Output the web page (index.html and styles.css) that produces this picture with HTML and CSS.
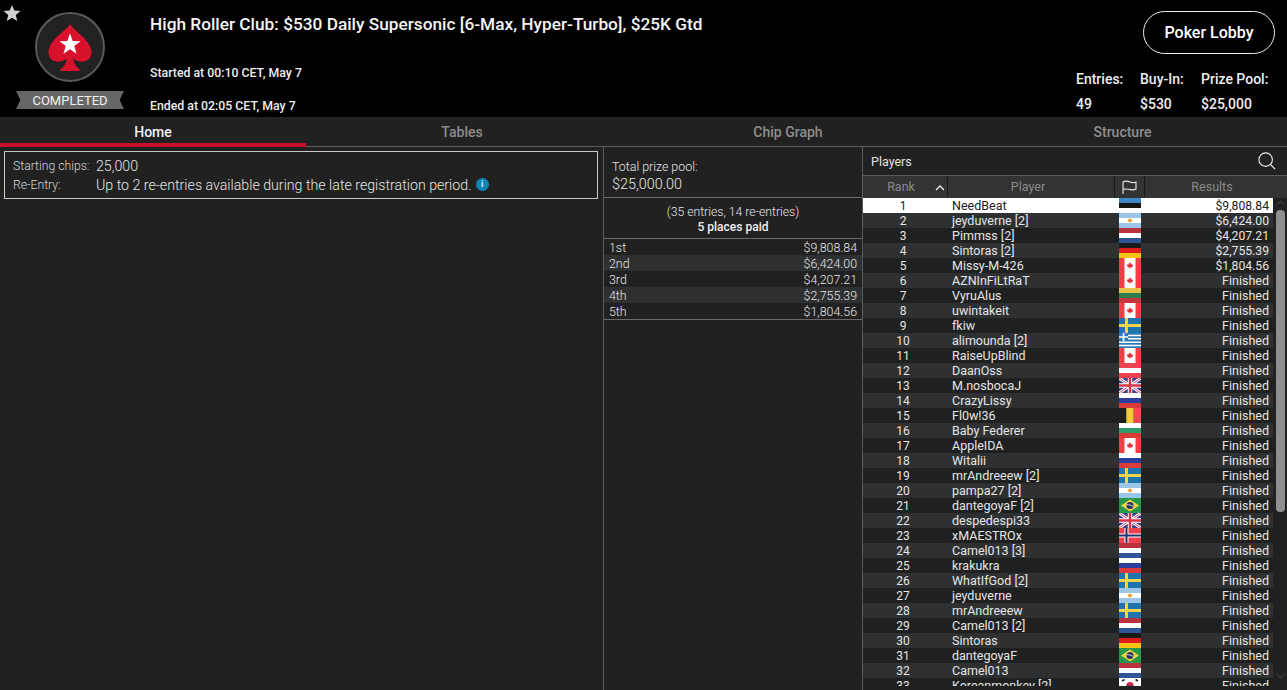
FILE: index.html
```html
<!DOCTYPE html>
<html lang="en">
<head>
<meta charset="utf-8">
<title>Tournament Lobby</title>
<link rel="stylesheet" href="styles.css">
</head>
<body>
<svg class="sprite" width="0" height="0" aria-hidden="true">
  <defs>
    <symbol id="leaf" viewBox="0 0 10 10"><path d="M5 0.5 6 2.3 7 1.8 6.6 4.2 7.9 3 8.3 3.9 9.6 3.7 9.2 5.1 9.8 5.4 7.6 7.2 7.9 8 5.3 7.7V9.6H4.7V7.7L2.1 8 2.4 7.2 0.2 5.4 0.8 5.1 0.4 3.7 1.7 3.9 2.1 3 3.4 4.2 3 1.8 4 2.3Z" fill="#e2303a"/></symbol>
    <symbol id="ee" viewBox="0 0 22 15"><rect width="22" height="5" fill="#3f86c4"/><rect y="5" width="22" height="5" fill="#161616"/><rect y="10" width="22" height="5" fill="#fff"/></symbol>
    <symbol id="ar" viewBox="0 0 22 15"><rect width="22" height="15" fill="#9cc6e8"/><rect y="5" width="22" height="5" fill="#fff"/><circle cx="11" cy="7.5" r="2" fill="#e8a33d"/></symbol>
    <symbol id="nl" viewBox="0 0 22 15"><rect width="22" height="5" fill="#b8323f"/><rect y="5" width="22" height="5" fill="#fff"/><rect y="10" width="22" height="5" fill="#2f5597"/></symbol>
    <symbol id="de" viewBox="0 0 22 15"><rect width="22" height="5" fill="#1a1a1a"/><rect y="5" width="22" height="5" fill="#dd1c1c"/><rect y="10" width="22" height="5" fill="#f6c413"/></symbol>
    <symbol id="ca" viewBox="0 0 22 15"><rect width="22" height="15" fill="#ee3f46"/><rect x="5.5" width="11" height="15" fill="#fff"/><use href="#leaf" x="7.5" y="4" width="7" height="7"/></symbol>
    <symbol id="lt" viewBox="0 0 22 15"><rect width="22" height="5" fill="#e6c24a"/><rect y="5" width="22" height="5" fill="#2c7d4b"/><rect y="10" width="22" height="5" fill="#c6343f"/></symbol>
    <symbol id="se" viewBox="0 0 22 15"><rect width="22" height="15" fill="#1f74ad"/><rect x="6" width="3" height="15" fill="#f2d14e"/><rect y="6" width="22" height="3" fill="#f2d14e"/></symbol>
    <symbol id="gr" viewBox="0 0 22 15"><rect width="22" height="15" fill="#2f7bb8"/><path d="M0 2.5H22M0 5.8H22M0 9.2H22M0 12.5H22" stroke="#fff" stroke-width="1.6"/><rect width="9" height="8" fill="#2f7bb8"/><path d="M4.5 0V8M0 4H9" stroke="#fff" stroke-width="1.7"/></symbol>
    <symbol id="at" viewBox="0 0 22 15"><rect width="22" height="15" fill="#ec4250"/><rect y="5" width="22" height="5" fill="#fff"/></symbol>
    <symbol id="uk" viewBox="0 0 22 15"><rect width="22" height="15" fill="#3b3f8f"/><path d="M0 0 22 15M22 0 0 15" stroke="#fff" stroke-width="3"/><path d="M0 0 22 15M22 0 0 15" stroke="#d84a6a" stroke-width="1"/><path d="M11 0V15M0 7.5H22" stroke="#fff" stroke-width="4.5"/><path d="M11 0V15M0 7.5H22" stroke="#d9344a" stroke-width="2.5"/></symbol>
    <symbol id="ru" viewBox="0 0 22 15"><rect width="22" height="5" fill="#fff"/><rect y="5" width="22" height="5" fill="#2a3f9c"/><rect y="10" width="22" height="5" fill="#db3a3a"/></symbol>
    <symbol id="be" viewBox="0 0 22 15"><rect width="7.3" height="15" fill="#1e1e1e"/><rect x="7.3" width="7.4" height="15" fill="#f4c935"/><rect x="14.7" width="7.3" height="15" fill="#f04a55"/></symbol>
    <symbol id="bg" viewBox="0 0 22 15"><rect width="22" height="5" fill="#fff"/><rect y="5" width="22" height="5" fill="#2f9a6a"/><rect y="10" width="22" height="5" fill="#d83a34"/></symbol>
    <symbol id="br" viewBox="0 0 22 15"><rect width="22" height="15" fill="#25994a"/><path d="M11 1.5 20 7.5 11 13.5 2 7.5Z" fill="#f4d23c"/><circle cx="11" cy="7.5" r="3.5" fill="#25306f"/><path d="M7.8 6.7C10 6.5 12.5 7.2 14.2 8.6" stroke="#fff" stroke-width=".8" fill="none"/></symbol>
    <symbol id="no" viewBox="0 0 22 15"><rect width="22" height="15" fill="#ec4250"/><path d="M7.5 0V15M0 7.5H22" stroke="#fff" stroke-width="4"/><path d="M7.5 0V15M0 7.5H22" stroke="#27306f" stroke-width="2"/></symbol>
    <symbol id="kr" viewBox="0 0 22 15"><rect width="22" height="15" fill="#fff"/><circle cx="11" cy="7.5" r="3.6" fill="#d4263a"/><path d="M7.4 7.5A3.6 3.6 0 0 0 14.6 7.5Z" fill="#2a3f8f"/><path d="M3 3 5.500 1.500M16.500 1.500 19 3M3 12 5.500 13.500M16.500 13.500 19 12" stroke="#222" stroke-width="1.600"/></symbol>
  </defs>
</svg>

<header class="top">
  <svg class="fav" viewBox="0 0 20 20" aria-hidden="true"><path d="M10 1 12.600 7.300 19.400 7.800 14.200 12.200 15.800 18.900 10 15.300 4.200 18.900 5.800 12.200 0.600 7.800 7.400 7.300Z" fill="#d0d0d0"/></svg>
  <div class="brand">
    <div class="logo">
      <svg viewBox="0 0 46 50" class="spade" aria-hidden="true">
        <path d="M23 1C28 9 45.500 18 45.500 31C45.500 40 34 43.500 26.500 37C27 42 29 46 33 48V50H13V48C17 46 19 42 19.500 37C12 43.500 0.500 40 0.500 31C0.500 18 18 9 23 1Z" fill="#d8112d"/>
        <path d="M23 11 25.800 18.700 34 19 27.500 24 29.800 32 23 27.300 16.200 32 18.500 24 12 19 20.200 18.700Z" fill="#fff"/>
      </svg>
    </div>
    <div class="ribbon">COMPLETED</div>
  </div>
  <div class="info">
    <h1 class="title">High Roller Club: $530 Daily Supersonic [6-Max, Hyper-Turbo], $25K Gtd</h1>
    <p class="time first">Started at 00:10 CET, May 7</p>
    <p class="time">Ended at 02:05 CET, May 7</p>
  </div>
  <div class="side">
    <button class="lobby" type="button">Poker Lobby</button>
    <div class="stats">
      <div class="stat s1"><span>Entries:</span><span>49</span></div>
      <div class="stat s2"><span>Buy-In:</span><span>$530</span></div>
      <div class="stat s3"><span>Prize Pool:</span><span>$25,000</span></div>
    </div>
  </div>
</header>

<nav class="tabs">
  <div class="tab active t1">Home</div>
  <div class="tab t2">Tables</div>
  <div class="tab t3">Chip Graph</div>
  <div class="tab t4">Structure</div>
</nav>

<main class="main">
  <section class="home">
    <div class="facts">
      <div class="fact"><span class="label">Starting chips:</span><span class="val">25,000</span></div>
      <div class="fact"><span class="label">Re-Entry:</span><span class="val">Up to 2 re-entries available during the late registration period.</span><span class="i">i</span></div>
    </div>
  </section>

  <section class="prizes">
    <div class="pool"><div>Total prize pool:</div><div class="big">$25,000.00</div></div>
    <div class="paid"><div>(35 entries, 14 re-entries)</div><div class="b">5 places paid</div></div>
    <div class="plist">
      <div class="prow"><span>1st</span><span>$9,808.84</span></div>
      <div class="prow"><span>2nd</span><span>$6,424.00</span></div>
      <div class="prow"><span>3rd</span><span>$4,207.21</span></div>
      <div class="prow"><span>4th</span><span>$2,755.39</span></div>
      <div class="prow"><span>5th</span><span>$1,804.56</span></div>
    </div>
  </section>

  <section class="players">
    <div class="phead"><span>Players</span>
      <svg class="search" viewBox="0 0 20 20" aria-hidden="true"><circle cx="8.500" cy="8.500" r="7.500" fill="none" stroke="#eee" stroke-width="1.200"/><path d="M14 14 19 19" stroke="#eee" stroke-width="1.400"/></svg>
    </div>
    <div class="thead">
      <div class="th rank">Rank<svg class="sort" viewBox="0 0 10 6" aria-hidden="true"><path d="M1 5 5 1 9 5" fill="none" stroke="#eee" stroke-width="1.300"/></svg></div>
      <div class="th player">Player</div>
      <div class="th flagh"><svg viewBox="0 0 15 14" aria-hidden="true"><path d="M1 14V2C4 0.500 6 1 8 2S12 2.800 14 2V9C11 10.500 10 10 8 9.500S3 8.800 1 9.500" fill="none" stroke="#eee" stroke-width="1.100"/></svg></div>
      <div class="th results">Results</div>
    </div>
    <div class="tbody">
      <div class="rows">
        <div class="row first"><span class="r">1</span><span class="n">NeedBeat</span><svg class="flag"><use href="#ee"/></svg><span class="w m">$9,808.84</span></div>
        <div class="row"><span class="r">2</span><span class="n">jeyduverne [2]</span><svg class="flag"><use href="#ar"/></svg><span class="w m">$6,424.00</span></div>
        <div class="row"><span class="r">3</span><span class="n">Pimmss [2]</span><svg class="flag"><use href="#nl"/></svg><span class="w m">$4,207.21</span></div>
        <div class="row"><span class="r">4</span><span class="n">Sintoras [2]</span><svg class="flag"><use href="#de"/></svg><span class="w m">$2,755.39</span></div>
        <div class="row"><span class="r">5</span><span class="n">Missy-M-426</span><svg class="flag"><use href="#ca"/></svg><span class="w m">$1,804.56</span></div>
        <div class="row"><span class="r">6</span><span class="n">AZNInFiLtRaT</span><svg class="flag"><use href="#ca"/></svg><span class="w">Finished</span></div>
        <div class="row"><span class="r">7</span><span class="n">VyruAlus</span><svg class="flag"><use href="#lt"/></svg><span class="w">Finished</span></div>
        <div class="row"><span class="r">8</span><span class="n">uwintakeit</span><svg class="flag"><use href="#ca"/></svg><span class="w">Finished</span></div>
        <div class="row"><span class="r">9</span><span class="n">fkiw</span><svg class="flag"><use href="#se"/></svg><span class="w">Finished</span></div>
        <div class="row"><span class="r">10</span><span class="n">alimounda [2]</span><svg class="flag"><use href="#gr"/></svg><span class="w">Finished</span></div>
        <div class="row"><span class="r">11</span><span class="n">RaiseUpBlind</span><svg class="flag"><use href="#ca"/></svg><span class="w">Finished</span></div>
        <div class="row"><span class="r">12</span><span class="n">DaanOss</span><svg class="flag"><use href="#at"/></svg><span class="w">Finished</span></div>
        <div class="row"><span class="r">13</span><span class="n">M.nosbocaJ</span><svg class="flag"><use href="#uk"/></svg><span class="w">Finished</span></div>
        <div class="row"><span class="r">14</span><span class="n">CrazyLissy</span><svg class="flag"><use href="#ru"/></svg><span class="w">Finished</span></div>
        <div class="row"><span class="r">15</span><span class="n">Fl0w!36</span><svg class="flag"><use href="#be"/></svg><span class="w">Finished</span></div>
        <div class="row"><span class="r">16</span><span class="n">Baby Federer</span><svg class="flag"><use href="#bg"/></svg><span class="w">Finished</span></div>
        <div class="row"><span class="r">17</span><span class="n">AppleIDA</span><svg class="flag"><use href="#ca"/></svg><span class="w">Finished</span></div>
        <div class="row"><span class="r">18</span><span class="n">Witalii</span><svg class="flag"><use href="#ru"/></svg><span class="w">Finished</span></div>
        <div class="row"><span class="r">19</span><span class="n">mrAndreeew [2]</span><svg class="flag"><use href="#se"/></svg><span class="w">Finished</span></div>
        <div class="row"><span class="r">20</span><span class="n">pampa27 [2]</span><svg class="flag"><use href="#ar"/></svg><span class="w">Finished</span></div>
        <div class="row"><span class="r">21</span><span class="n">dantegoyaF [2]</span><svg class="flag"><use href="#br"/></svg><span class="w">Finished</span></div>
        <div class="row"><span class="r">22</span><span class="n">despedespi33</span><svg class="flag"><use href="#uk"/></svg><span class="w">Finished</span></div>
        <div class="row"><span class="r">23</span><span class="n">xMAESTROx</span><svg class="flag"><use href="#no"/></svg><span class="w">Finished</span></div>
        <div class="row"><span class="r">24</span><span class="n">Camel013 [3]</span><svg class="flag"><use href="#nl"/></svg><span class="w">Finished</span></div>
        <div class="row"><span class="r">25</span><span class="n">krakukra</span><svg class="flag"><use href="#ru"/></svg><span class="w">Finished</span></div>
        <div class="row"><span class="r">26</span><span class="n">WhatIfGod [2]</span><svg class="flag"><use href="#se"/></svg><span class="w">Finished</span></div>
        <div class="row"><span class="r">27</span><span class="n">jeyduverne</span><svg class="flag"><use href="#ar"/></svg><span class="w">Finished</span></div>
        <div class="row"><span class="r">28</span><span class="n">mrAndreeew</span><svg class="flag"><use href="#se"/></svg><span class="w">Finished</span></div>
        <div class="row"><span class="r">29</span><span class="n">Camel013 [2]</span><svg class="flag"><use href="#nl"/></svg><span class="w">Finished</span></div>
        <div class="row"><span class="r">30</span><span class="n">Sintoras</span><svg class="flag"><use href="#de"/></svg><span class="w">Finished</span></div>
        <div class="row"><span class="r">31</span><span class="n">dantegoyaF</span><svg class="flag"><use href="#br"/></svg><span class="w">Finished</span></div>
        <div class="row"><span class="r">32</span><span class="n">Camel013</span><svg class="flag"><use href="#nl"/></svg><span class="w">Finished</span></div>
        <div class="row"><span class="r">33</span><span class="n">Koreanmonkey [2]</span><svg class="flag"><use href="#kr"/></svg><span class="w">Finished</span></div>
      </div>
      <div class="scroll">
        <svg class="arrow" viewBox="0 0 10 6" aria-hidden="true"><path d="M1 5 5 1 9 5" fill="none" stroke="#555" stroke-width="1"/></svg>
        <div class="thumb"></div>
        <svg class="arrow" viewBox="0 0 10 6" aria-hidden="true"><path d="M1 1 5 5 9 1" fill="none" stroke="#555" stroke-width="1"/></svg>
      </div>
    </div>
  </section>
</main>
</body>
</html>
```
FILE: styles.css
```css
* { box-sizing: border-box; }
html, body { margin: 0; height: 690px; overflow: hidden; background: #212121; }
body { font-family: Roboto, "Liberation Sans", sans-serif; font-size: 12px; color: #e6e6e6; display: flex; flex-direction: column; }
.sprite { position: absolute; }

.top { position: relative; height: 117px; background: #000; display: flex; flex: none; color: #fff; }
.fav { position: absolute; left: 3px; top: 4px; width: 18px; height: 18px; }
.brand { width: 150px; flex: none; padding: 12px 0 0 16px; }
.logo { width: 70px; height: 70px; margin-left: 19px; border-radius: 50%; background: #222; border: 2px solid #5a5a5a; display: flex; align-items: center; justify-content: center; }
.spade { width: 44px; height: 48px; margin-top: -1px; }
.ribbon { width: 108px; height: 18px; margin-top: 9px; background: #666; color: #f2f2f2; font-size: 13px; line-height: 20px; text-align: center; clip-path: polygon(0 0, 100% 0, 96% 50%, 100% 100%, 0 100%, 4% 50%); }
.info { flex: 1; min-width: 0; padding-top: 14px; }
.title { margin: 0; font-size: 17.25px; line-height: 20px; font-weight: 500; color: #f4f4f4; }
.time { margin: 0; font-size: 12.3px; line-height: 14px; font-weight: 500; color: #eee; }
.time.first { margin-top: 32px; }
.time + .time { margin-top: 19px; }
.side { width: 211px; flex: none; padding-top: 11px; }
.lobby { display: block; margin-left: 67px; width: 132px; height: 43px; border: 1px solid #eee; border-radius: 22px; background: transparent; color: #fff; font: 500 16px Roboto, sans-serif; }
.stats { display: flex; margin-top: 18px; }
.stat { display: flex; flex-direction: column; gap: 10px; font-size: 14px; line-height: 15px; font-weight: 500; color: #eee; }
.s1 { width: 64px; }
.s2 { width: 61px; }

.tabs { height: 30px; flex: none; display: flex; background: #212121; border-bottom: 1px solid #5c5c5c; }
.tab { height: 29px; padding-top: 7px; text-align: center; font-size: 14px; line-height: 16px; font-weight: 500; color: #8e8e8e; }
.t1 { width: 306px; }
.t2 { width: 312px; }
.t3 { width: 340px; }
.t4 { width: 329px; }
.tab.active { color: #f0f0f0; height: 30px; border-bottom: 4px solid #c8102e; }

.main { flex: 1; min-height: 0; display: flex; }
.home { width: 603px; flex: none; padding: 4px 5px 0 4px; }
.facts { border: 1px solid #c8c8c8; height: 48px; padding: 4px 8px; font-weight: 300; }
.fact { display: flex; align-items: center; height: 19px; }
.label { width: 83px; flex: none; font-size: 12.2px; color: #d8d8d8; }
.val { font-size: 14.2px; color: #e6e6e6; }
.i { width: 13px; height: 13px; margin-left: 4px; border-radius: 50%; background: #0d86b5; color: #fff; font-size: 9px; line-height: 13px; font-weight: 500; text-align: center; }

.prizes { width: 260px; flex: none; border-left: 1px solid #5c5c5c; border-right: 1px solid #5c5c5c; font-weight: 300; font-size: 12.4px; }
.pool { height: 51px; padding: 12px 8px 0; border-bottom: 1px solid #6a6a6a; line-height: 16px; }
.pool .big { font-size: 14.4px; line-height: 19px; }
.paid { height: 41px; padding-top: 6px; border-bottom: 1px solid #6a6a6a; text-align: center; font-size: 12.2px; line-height: 16px; }
.paid .b { font-weight: 500; font-size: 12px; line-height: 15px; color: #f0f0f0; }
.plist { border-bottom: 1px solid #6a6a6a; }
.prow { height: 16px; padding: 1px 5px 0; display: flex; justify-content: space-between; align-items: center; }
.prow:nth-child(even) { background: #2e3032; }

.players { flex: 1; min-width: 0; display: flex; flex-direction: column; }
.phead { height: 29px; flex: none; padding: 1px 11px 0 8px; display: flex; align-items: center; justify-content: space-between; border-bottom: 1px solid #5c5c5c; font-size: 12.5px; color: #e0e0e0; }
.search { width: 18px; height: 18px; margin-top: -1px; }
.thead { height: 22px; flex: none; display: flex; background: #333; color: #8a8a8a; font-size: 12.5px; }
.th { display: flex; align-items: center; justify-content: center; padding-bottom: 1px; border-right: 1px solid #1c1c1c; position: relative; }
.rank { width: 85px; padding-right: 8px; }
.sort { position: absolute; right: 2px; top: 9px; width: 10px; height: 6px; }
.player { width: 167px; padding-right: 6px; }
.flagh { width: 30px; padding-bottom: 0; }
.flagh svg { width: 15px; height: 14px; }
.results { flex: 1; border-right: 0; padding-right: 8px; }

.tbody { flex: 1; min-height: 0; display: flex; padding-bottom: 4px; }
.rows { width: 410px; flex: none; overflow: hidden; }
.row { height: 15px; display: grid; grid-template-columns: 80px 176px 22px 132px; grid-template-rows: 15px; align-items: start; background: #1f2020; font-size: 12.5px; line-height: 16px; color: #e6e6e6; }
.row:nth-child(even) { background: #2e3032; }
.row.first { background: #fff; color: #222; }
.r { text-align: center; font-size: 12px; line-height: 17px; }
.n { padding-left: 9px; white-space: nowrap; }
.w { text-align: right; padding-right: 4px; }
.m { font-size: 12.2px; }
.flag { width: 22px; height: 15px; display: block; }

.scroll { flex: 1; padding: 2px 3px 3px; display: flex; flex-direction: column; align-items: center; }
.arrow { width: 9px; height: 6px; flex: none; }
.thumb { width: 9px; height: 302px; margin: 4px 0 161px; border-radius: 4px; background: #8f8f8f; flex: none; }
```
